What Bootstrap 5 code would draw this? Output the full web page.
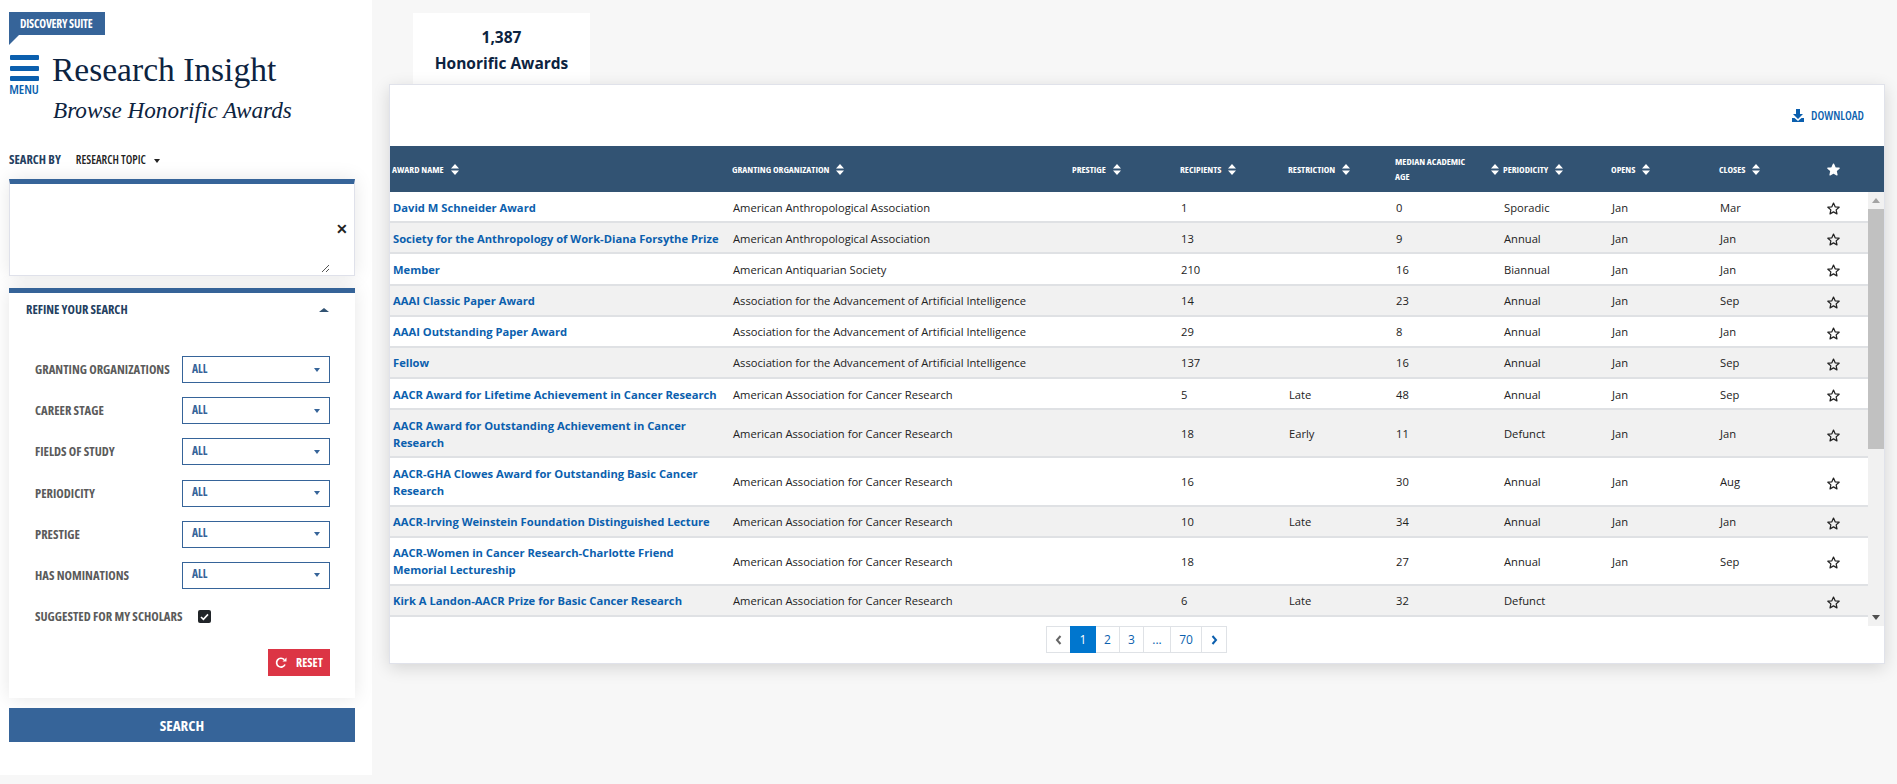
<!DOCTYPE html>
<html lang="en"><head><meta charset="utf-8"><title>Research Insight</title>
<link href="https://cdn.jsdelivr.net/npm/bootstrap@5.3.0/dist/css/bootstrap.min.css" rel="stylesheet">
<style>
:root{--navy:#0c2340;--blue:#366499;--head:#325373;--link:#0b5fae}
html,body{height:784px;overflow:hidden}
body{background:#f7f7f7;font-family:"Open Sans","Liberation Sans",sans-serif;font-size:11.2px;color:#222}
.cond{font-family:"Open Sans","Liberation Sans Narrow",sans-serif;font-stretch:75%;font-weight:700;text-transform:uppercase}
.app{align-items:flex-start;height:784px}
.sidebar{width:372px;height:775px;background:#fff;padding:12px 17px 0 9px;flex:none}
.suite{display:inline-block;height:23px;width:96px;background:var(--blue);color:#fff;font-size:11.5px;letter-spacing:-.2px;line-height:23px;padding-left:11px;position:relative;white-space:nowrap}
.suite::after{content:"";position:absolute;left:0;top:23px;border-top:10px solid var(--blue);border-right:10px solid transparent}
.brand{margin-top:20px;gap:13px;height:70px}
.burger{width:30px;color:#0b5fae;text-align:center}
.burger i{display:block;height:5px;background:#0b5fae;border-radius:1px;margin-bottom:5.5px;margin-left:1px}
.burger span{font-size:13px;line-height:12px;margin-top:-4px;font-weight:600}
.ttl{font-family:"Liberation Serif",serif;color:var(--navy);font-size:33.5px;line-height:40px;margin:-5px 0 0}
.sub{font-family:"Liberation Serif",serif;font-style:italic;color:var(--navy);font-size:23.2px;line-height:28px;margin:6px 0 0 1px}
.searchby{height:16px;margin-top:27px;gap:15px;color:#24405f;font-size:12.5px;line-height:16px}
.searchby span+span{color:#222;font-size:11.6px;font-weight:600}
.tri{display:inline-block;border-left:3.5px solid transparent;border-right:3.5px solid transparent;border-top:4px solid currentColor;vertical-align:middle;margin-left:8px}
.tri.up{border-top:0;border-bottom:4.5px solid currentColor;border-left-width:5px;border-right-width:5px}
.qbox{height:97px;border-top:5px solid var(--blue);border-left:1px solid #dfe1ea;border-right:1px solid #dfe1ea;border-bottom:1px solid #dfe1ea;margin-top:11px;background:#fff;box-shadow:0 0 18px rgba(0,0,0,.1);position:relative}
.qx{position:absolute;right:6px;top:38px;font-weight:700;font-size:14px;line-height:14px;color:#222}
.grip{position:absolute;right:24px;bottom:2px}
.refine{height:410px;margin-top:12px;border-top:5px solid var(--blue);background:#fff;box-shadow:0 0 18px rgba(0,0,0,.1);padding:0 25px 0 17px}
.rhead{height:34px;padding-top:7px;color:#24405f;font-size:12.5px;line-height:20px}
.rhead .tri{color:var(--head);margin-right:1px}
.fields{margin-top:29px;padding-left:9px}
.frow{height:27px;margin-bottom:14.2px;color:#5b5b5b;font-size:12.6px}
.frow>span:first-child{margin-top:2px}
.fsel{width:148px;height:27px;border:1px solid var(--blue);color:var(--blue);font-size:11.5px;padding:0 9px;line-height:24px}
.fsel span{margin-top:-2px}
.fsel .tri{margin:0}
.chk{width:13px;height:13px;background:#212529;border-radius:2px;margin-left:16px;color:#fff}
.reset{width:62px;height:27px;background:#dc3545;color:#fff;border:0;border-radius:0;font-size:12px;line-height:27px;padding:0;gap:9px;margin-top:-1px}
.reset:hover{background:#dc3545;color:#fff}
.gosearch{height:34px;width:346px;margin-top:10px;background:var(--blue);color:#fff;border-radius:0;border:0;font-size:15px;line-height:34px;padding:0}
.gosearch:hover{background:var(--blue);color:#fff}
.mainarea{flex:1;min-width:0;padding:13px 12px 0 17px}
.statb{width:177px;height:72px;margin-left:24px;background:#fff;text-align:center;color:var(--navy);font-weight:700;font-size:15.5px;padding-top:11px;line-height:26px}
.panel{height:580px;margin-top:-1px;background:#fff;border:1px solid #e0e2ea;box-shadow:0 4px 16px rgba(0,0,0,.14);position:relative}
.dlbar{height:61px;padding-right:20px;color:#0b5fae;font-size:12px;gap:7px}
.htbl,.btbl{table-layout:fixed;border-collapse:collapse;margin:0}
.htbl{width:100%;background:var(--head);height:46px}
.htbl th{background:var(--head);color:#fff;font-size:9.5px;line-height:15px;padding:0 2px;border:0;vertical-align:middle;box-shadow:none;font-family:"Open Sans",sans-serif;font-stretch:87%;font-weight:700;text-transform:uppercase}
.thin{display:flex;align-items:center;gap:7px}
.thin svg{flex:none}
.thin.wrapd{justify-content:space-between}
.thin.wrapd span{width:80px}
.bwrap{height:430px;overflow:hidden;width:calc(100% - 16px)}
.btbl{width:100%;--bs-table-bg:transparent}
.btbl td{padding:6.6px 2px 5.58px 3px;font-size:11.2px;line-height:17px;color:#222;vertical-align:middle;border-bottom:2px solid #dfe1e4;box-shadow:none}
.btbl td:last-child{padding-left:2px}
.btbl tr:nth-child(even) td{background:#f1f1f1}
.btbl a{color:var(--link);font-weight:700;text-decoration:none;display:block}
.sbar{position:absolute;right:0;top:107px;width:16px;height:434px;background:#f1f1f1}
.sthumb{position:absolute;left:0;top:17px;width:16px;height:240px;background:#c1c1c1}
.sar{position:absolute;left:4px;border-left:4px solid transparent;border-right:4px solid transparent}
.pagebar{position:absolute;left:656px;top:541px}
.pager{--bs-pagination-padding-y:0;--bs-pagination-font-size:12px;--bs-pagination-color:#0b5fae;--bs-pagination-border-color:#dfe2e6;--bs-pagination-active-bg:#0076ce;--bs-pagination-active-border-color:#0076ce;--bs-pagination-border-radius:0;margin:0;--bs-pagination-padding-x:0}
.pager .page-link{height:27px;line-height:25px;text-align:center;display:block}
.pager .page-link svg{vertical-align:-1px}
</style></head>
<body>
<div class="app d-flex">
<aside class="sidebar">
 <div class="suite cond">Discovery Suite</div>
 <div class="brand d-flex">
  <div class="burger"><i></i><i></i><i></i><span class="cond d-block">Menu</span></div>
  <div><h1 class="ttl">Research Insight</h1><div class="sub">Browse Honorific Awards</div></div>
 </div>
 <div class="searchby d-flex cond"><span>Search by</span><span>Research Topic<i class="tri"></i></span></div>
 <div class="qbox"><span class="qx">✕</span>
  <svg class="grip" width="9" height="9" viewBox="0 0 9 9"><path d="M1 8 8 1M5 8l3-3" stroke="#555" stroke-width="1" fill="none"/></svg></div>
 <section class="refine">
  <div class="rhead d-flex justify-content-between align-items-start cond"><span>Refine your search</span><i class="tri up mt-2"></i></div>
  <div class="fields">
   <div class="frow d-flex justify-content-between align-items-center cond"><span>Granting Organizations</span><div class="fsel d-flex justify-content-between align-items-center"><span>All</span><i class="tri"></i></div></div>
   <div class="frow d-flex justify-content-between align-items-center cond"><span>Career Stage</span><div class="fsel d-flex justify-content-between align-items-center"><span>All</span><i class="tri"></i></div></div>
   <div class="frow d-flex justify-content-between align-items-center cond"><span>Fields of Study</span><div class="fsel d-flex justify-content-between align-items-center"><span>All</span><i class="tri"></i></div></div>
   <div class="frow d-flex justify-content-between align-items-center cond"><span>Periodicity</span><div class="fsel d-flex justify-content-between align-items-center"><span>All</span><i class="tri"></i></div></div>
   <div class="frow d-flex justify-content-between align-items-center cond"><span>Prestige</span><div class="fsel d-flex justify-content-between align-items-center"><span>All</span><i class="tri"></i></div></div>
   <div class="frow d-flex justify-content-between align-items-center cond"><span>Has Nominations</span><div class="fsel d-flex justify-content-between align-items-center"><span>All</span><i class="tri"></i></div></div>
   <div class="frow d-flex align-items-center cond"><span>Suggested for my scholars</span>
    <span class="chk d-flex align-items-center justify-content-center"><svg width="9" height="8" viewBox="0 0 9 8"><path d="M1 4l2.400 2.400L8 1.400" stroke="#fff" stroke-width="1.600" fill="none"/></svg></span></div>
   <div class="d-flex justify-content-end" style="margin-top:20px"><button class="btn reset cond d-flex align-items-center justify-content-center"><svg width="12" height="12" viewBox="0 0 12 12"><path d="M10 7.500A4.400 4.400 0 1 1 9.200 2.600" stroke="#fff" stroke-width="1.700" fill="none"/><path d="M11.500 .5v4h-4z" fill="#fff"/></svg><span>Reset</span></button></div>
  </div>
 </section>
 <button class="btn gosearch cond d-block">Search</button>
</aside>
<main class="mainarea">
 <div class="statb">1,387<br>Honorific Awards</div>
 <div class="panel">
  <div class="dlbar d-flex justify-content-end align-items-center cond" style="font-weight:600"><svg width="12" height="13" viewBox="0 0 12 13"><path d="M4 0h4v5h3L6 10 1 5h3z" fill="#0b5fae"/><path d="M0 9h2.500L6 12l3.500-3H12v4H0z" fill="#0b5fae"/></svg><span>Download</span></div>
  <table class="table htbl"><colgroup><col style="width:340px"><col style="width:340px"><col style="width:108px"><col style="width:108px"><col style="width:107px"><col style="width:108px"><col style="width:108px"><col style="width:108px"><col style="width:108px"><col></colgroup><thead><tr id="hr"></tr></thead></table>
  <div class="bwrap"><table class="table btbl"><colgroup><col style="width:340px"><col style="width:340px"><col style="width:108px"><col style="width:108px"><col style="width:107px"><col style="width:108px"><col style="width:108px"><col style="width:108px"><col style="width:108px"><col></colgroup><tbody id="tb"></tbody></table></div>
  <div class="sbar"><i class="sar" style="top:6px;border-bottom:5px solid #a3a3a3"></i><div class="sthumb"></div><i class="sar" style="bottom:6px;border-top:5px solid #505050"></i></div>
  <nav class="pagebar"><ul class="pagination pager" id="pg"></ul></nav>
 </div>
</main>
</div>
<script>
var sort='<svg width="8" height="11" viewBox="0 0 8 11"><path d="M4 0l4 4.500H0zM4 11L0 6.500h8z" fill="#fff"/></svg>';
var star=function(c,f){return '<svg width="13" height="13" viewBox="0 0 24 24"><path d="M12 2l3 6.800 7.400.8-5.500 5 1.500 7.300L12 18.200 5.600 21.900l1.500-7.300-5.500-5L9 8.800z" fill="'+f+'" stroke="'+c+'" stroke-width="2.300" stroke-linejoin="round"/></svg>'};
var heads=['Award Name','Granting Organization','Prestige','Recipients','Restriction','Median Academic Age','Periodicity','Opens','Closes'];
document.getElementById('hr').innerHTML=heads.map(function(h,i){return '<th><div class="thin'+(i==5?' wrapd':'')+'"><span>'+h+'</span>'+sort+'</div></th>'}).join('')+'<th style="padding-left:2px">'+star('#fff','#fff')+'</th>';
var A='American Anthropological Association',B='Association for the Advancement of Artificial Intelligence',C='American Association for Cancer Research';
var rows=[['David M Schneider Award',A,'1','','0','Sporadic','Jan','Mar'],['Society for the Anthropology of Work-Diana Forsythe Prize',A,'13','','9','Annual','Jan','Jan'],['Member','American Antiquarian Society','210','','16','Biannual','Jan','Jan'],['AAAI Classic Paper Award',B,'14','','23','Annual','Jan','Sep'],['AAAI Outstanding Paper Award',B,'29','','8','Annual','Jan','Jan'],['Fellow',B,'137','','16','Annual','Jan','Sep'],['AACR Award for Lifetime Achievement in Cancer Research',C,'5','Late','48','Annual','Jan','Sep'],['AACR Award for Outstanding Achievement in Cancer Research',C,'18','Early','11','Defunct','Jan','Jan'],['AACR-GHA Clowes Award for Outstanding Basic Cancer Research',C,'16','','30','Annual','Jan','Aug'],['AACR-Irving Weinstein Foundation Distinguished Lecture',C,'10','Late','34','Annual','Jan','Jan'],['AACR-Women in Cancer Research-Charlotte Friend Memorial Lectureship',C,'18','','27','Annual','Jan','Sep'],['Kirk A Landon-AACR Prize for Basic Cancer Research',C,'6','Late','32','Defunct','','']];
document.getElementById('tb').innerHTML=rows.map(function(r){return '<tr><td><a href="#">'+r[0]+'</a></td><td>'+r[1]+'</td><td></td><td>'+r[2]+'</td><td>'+r[3]+'</td><td>'+r[4]+'</td><td>'+r[5]+'</td><td>'+r[6]+'</td><td>'+r[7]+'</td><td>'+star('#222','none')+'</td></tr>'}).join('');
var pw=[25,26,25,25,28,32,26],pl=['‹','1','2','3','...','70','›'];
document.getElementById('pg').innerHTML=pl.map(function(t,i){var ch=i==0?'<svg width="7" height="10" viewBox="0 0 7 10"><path d="M5.500 1 2 5l3.500 4" stroke="#666" stroke-width="2" fill="none"/></svg>':i==6?'<svg width="7" height="10" viewBox="0 0 7 10"><path d="M1.500 1 5 5 1.500 9" stroke="#0b5fae" stroke-width="2" fill="none"/></svg>':t;return '<li class="page-item'+(i==1?' active':'')+'"><a class="page-link" href="#" style="width:'+pw[i]+'px">'+ch+'</a></li>'}).join('');
</script>
</body></html>
